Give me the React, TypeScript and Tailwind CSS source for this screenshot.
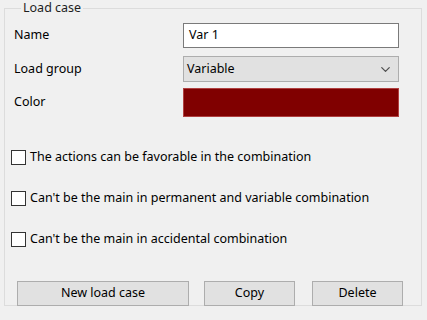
import { ChevronDown } from 'lucide-react'

const options = [
  'The actions can be favorable in the combination',
  "Can't be the main in permanent and variable combination",
  "Can't be the main in accidental combination",
]

export default function App() {
  return (
    <div className="w-[427px] h-[320px] bg-[#f0f0f0] pt-0 pl-[4px] font-['Noto_Sans','Open_Sans',sans-serif] text-[12.5px] text-black">
      <fieldset className="w-[414px] h-[306px] border border-[#dcdcdc] pl-[9px] pr-[18px]">
        <legend className="ml-[7px] px-[2px] leading-[16px] text-[#1e1e1e]">Load case</legend>

        {/* Fields */}
        <div className="mt-[7px] flex items-center h-[25px]">
          <span className="w-[169px]">Name</span>
          <div className="w-[216px] h-[25px] bg-white border border-[#7a7a7a] flex items-center px-[5px]">Var 1</div>
        </div>
        <div className="mt-[8px] flex items-center h-[26px]">
          <span className="w-[169px]">Load group</span>
          <div className="w-[216px] h-[26px] bg-[#e1e1e1] border border-[#adadad] flex items-center justify-between pl-[3px] pr-[5px]">
            <span>Variable</span>
            <ChevronDown className="w-[15px] h-[15px] text-[#505050]" strokeWidth={2} />
          </div>
        </div>
        <div className="mt-[6px] flex items-center h-[29px]">
          <span className="w-[169px]">Color</span>
          <div className="w-[216px] h-[29px] bg-[#800000] border border-[#b04040]" />
        </div>

        {/* Options */}
        <div className="mt-[33px] flex flex-col gap-[26px] -ml-[3px]">
          {options.map((o) => (
            <label key={o} className="flex items-center gap-[4px] h-[15px]">
              <span className="w-[15px] h-[15px] border border-[#333333] bg-white shrink-0" />
              <span>{o}</span>
            </label>
          ))}
        </div>

        {/* Buttons */}
        <div className="mt-[34px] flex gap-[15px] ml-[3px]">
          <button className="w-[172px] h-[25px] bg-[#e1e1e1] border border-[#adadad]">New load case</button>
          <button className="w-[91px] h-[25px] bg-[#e1e1e1] border border-[#adadad]">Copy</button>
          <button className="w-[91px] h-[25px] bg-[#e1e1e1] border border-[#adadad] ml-[2px]">Delete</button>
        </div>
      </fieldset>
    </div>
  )
}
